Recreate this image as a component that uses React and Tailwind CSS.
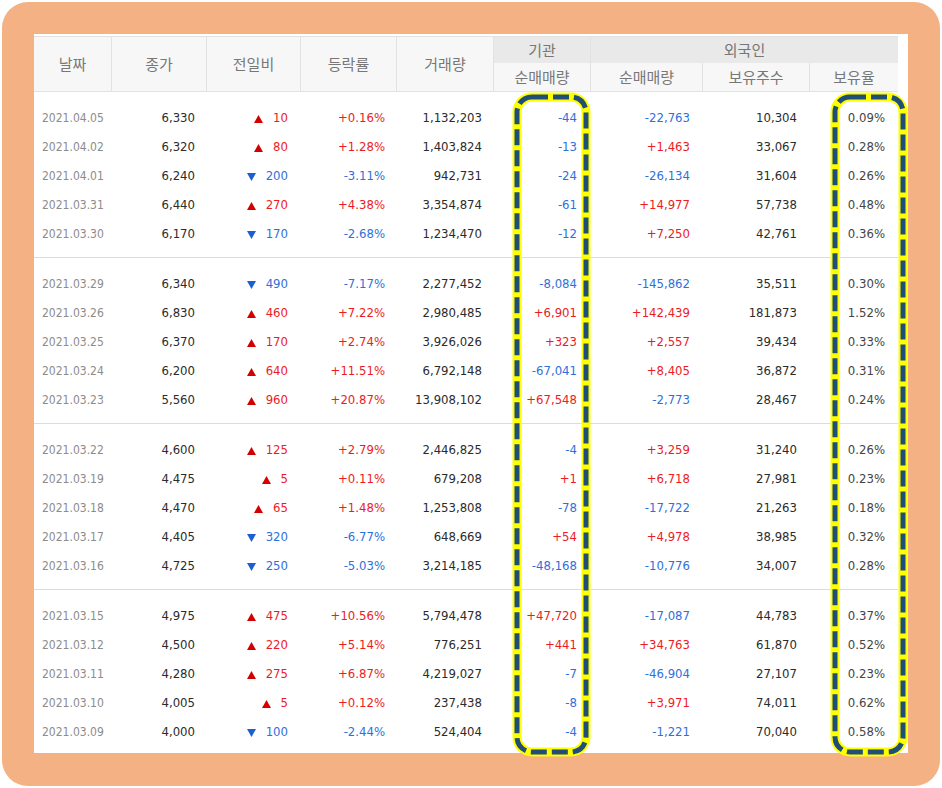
import React from "react";

const cols = "grid grid-cols-[78px_95px_94px_96px_97px_97px_112px_107px_88px]";

const groups = [
  [
    ["2021.04.05", "6,330", 10, "+0.16%", "1,132,203", "-44", "-22,763", "10,304", "0.09%"],
    ["2021.04.02", "6,320", 80, "+1.28%", "1,403,824", "-13", "+1,463", "33,067", "0.28%"],
    ["2021.04.01", "6,240", -200, "-3.11%", "942,731", "-24", "-26,134", "31,604", "0.26%"],
    ["2021.03.31", "6,440", 270, "+4.38%", "3,354,874", "-61", "+14,977", "57,738", "0.48%"],
    ["2021.03.30", "6,170", -170, "-2.68%", "1,234,470", "-12", "+7,250", "42,761", "0.36%"],
  ],
  [
    ["2021.03.29", "6,340", -490, "-7.17%", "2,277,452", "-8,084", "-145,862", "35,511", "0.30%"],
    ["2021.03.26", "6,830", 460, "+7.22%", "2,980,485", "+6,901", "+142,439", "181,873", "1.52%"],
    ["2021.03.25", "6,370", 170, "+2.74%", "3,926,026", "+323", "+2,557", "39,434", "0.33%"],
    ["2021.03.24", "6,200", 640, "+11.51%", "6,792,148", "-67,041", "+8,405", "36,872", "0.31%"],
    ["2021.03.23", "5,560", 960, "+20.87%", "13,908,102", "+67,548", "-2,773", "28,467", "0.24%"],
  ],
  [
    ["2021.03.22", "4,600", 125, "+2.79%", "2,446,825", "-4", "+3,259", "31,240", "0.26%"],
    ["2021.03.19", "4,475", 5, "+0.11%", "679,208", "+1", "+6,718", "27,981", "0.23%"],
    ["2021.03.18", "4,470", 65, "+1.48%", "1,253,808", "-78", "-17,722", "21,263", "0.18%"],
    ["2021.03.17", "4,405", -320, "-6.77%", "648,669", "+54", "+4,978", "38,985", "0.32%"],
    ["2021.03.16", "4,725", -250, "-5.03%", "3,214,185", "-48,168", "-10,776", "34,007", "0.28%"],
  ],
  [
    ["2021.03.15", "4,975", 475, "+10.56%", "5,794,478", "+47,720", "-17,087", "44,783", "0.37%"],
    ["2021.03.12", "4,500", 220, "+5.14%", "776,251", "+441", "+34,763", "61,870", "0.52%"],
    ["2021.03.11", "4,280", 275, "+6.87%", "4,219,027", "-7", "-46,904", "27,107", "0.23%"],
    ["2021.03.10", "4,005", 5, "+0.12%", "237,438", "-8", "+3,971", "74,011", "0.62%"],
    ["2021.03.09", "4,000", -100, "-2.44%", "524,404", "-4", "-1,221", "70,040", "0.58%"],
  ],
];

// red for +, blue for -
const tone = (v) => (v.startsWith("+") ? "text-[#ec1c24]" : "text-[#2f6fdc]");

function Arrow({ up }) {
  return up ? (
    <svg width="9" height="8" viewBox="0 0 9 8" className="mr-[10px] mt-[2px]">
      <path d="M4.5 0 L9 8 L0 8 Z" fill="#d40000" />
    </svg>
  ) : (
    <svg width="9" height="8" viewBox="0 0 9 8" className="mr-[10px] mt-[2px]">
      <path d="M0 0 L9 0 L4.5 8 Z" fill="#1d5fd0" />
    </svg>
  );
}

function Row({ r }) {
  const [date, close, diff, rate, vol, inst, frgn, hold, ratio] = r;
  const num = "text-right pr-[12px]";
  return (
    <div className={`${cols} h-[29px] items-center text-[13px] text-[#2b2b2b]`}>
      <div className="pl-[8px] text-[12px] text-[#8c8c8c]">{date}</div>
      <div className={num}>{close}</div>
      <div className={`flex items-center justify-end pr-[13px] ${diff > 0 ? "text-[#ec1c24]" : "text-[#2f6fdc]"}`}>
        <Arrow up={diff > 0} />
        <span>{Math.abs(diff)}</span>
      </div>
      <div className={`${num} ${tone(rate)}`}>{rate}</div>
      <div className={num}>{vol}</div>
      <div className={`text-right pr-[14px] ${tone(inst)}`}>{inst}</div>
      <div className={`text-right pr-[13px] ${tone(frgn)}`}>{frgn}</div>
      <div className="text-right pr-[13px]">{hold}</div>
      <div className="text-right pr-[13px] text-[#444]">{ratio}</div>
    </div>
  );
}

function DashBox({ x, y, w, h }) {
  return (
    <g>
      <rect x={x} y={y} width={w} height={h} rx="15" fill="none" stroke="#ffff00" strokeWidth="9" />
      <rect x={x} y={y} width={w} height={h} rx="15" fill="none" stroke="#1f4e79" strokeWidth="5" strokeDasharray="16 5" />
    </g>
  );
}

export default function App() {
  const head = "flex items-center justify-center border-r border-[#e2e2e2]";
  return (
    <div
      className="relative w-[942px] h-[788px] bg-white p-[2px]"
      style={{ fontFamily: "'DejaVu Sans Condensed', 'DejaVu Sans', sans-serif" }}
    >
      <div className="h-full rounded-[26px] bg-[#f4b183] pt-[32px] pl-[32px] pr-[32px] pb-[33px]">
        <div className="h-full bg-white pt-[2px]">
          <div className="w-[864px]">
            {/* header */}
            <div
              className={`${cols} grid-rows-[26px_28px] border-t border-b border-[#e2e2e2] text-[15px] text-[#777]`}
              style={{ fontFamily: "'Noto Sans CJK KR', sans-serif" }}
            >
              <div className={`${head} row-span-2 bg-[#f7f7f7]`}>날짜</div>
              <div className={`${head} row-span-2 bg-[#f7f7f7]`}>종가</div>
              <div className={`${head} row-span-2 bg-[#f7f7f7]`}>전일비</div>
              <div className={`${head} row-span-2 bg-[#f7f7f7]`}>등락률</div>
              <div className={`${head} row-span-2 bg-[#f7f7f7]`}>거래량</div>
              <div className={`${head} bg-[#e9e9e9]`}>기관</div>
              <div className="col-span-3 flex items-center justify-center bg-[#e9e9e9]">외국인</div>
              <div className={`${head} bg-[#f7f7f7]`}>순매매량</div>
              <div className={`${head} bg-[#f7f7f7]`}>순매매량</div>
              <div className={`${head} bg-[#f7f7f7]`}>보유주수</div>
              <div className="flex items-center justify-center bg-[#f7f7f7]">보유율</div>
            </div>

            {/* body */}
            {groups.map((g, i) => (
              <div
                key={i}
                className={`pt-[11px] pb-[9px] ${i < groups.length - 1 ? "border-b border-[#dcdcdc]" : ""}`}
              >
                {g.map((r) => (
                  <Row key={r[0]} r={r} />
                ))}
              </div>
            ))}
          </div>
        </div>
      </div>

      <svg className="pointer-events-none absolute left-0 top-0" width="942" height="788">
        <DashBox x={517} y={97} w={69} h={655} />
        <DashBox x={835} y={97} w={68} h={655} />
      </svg>
    </div>
  );
}
